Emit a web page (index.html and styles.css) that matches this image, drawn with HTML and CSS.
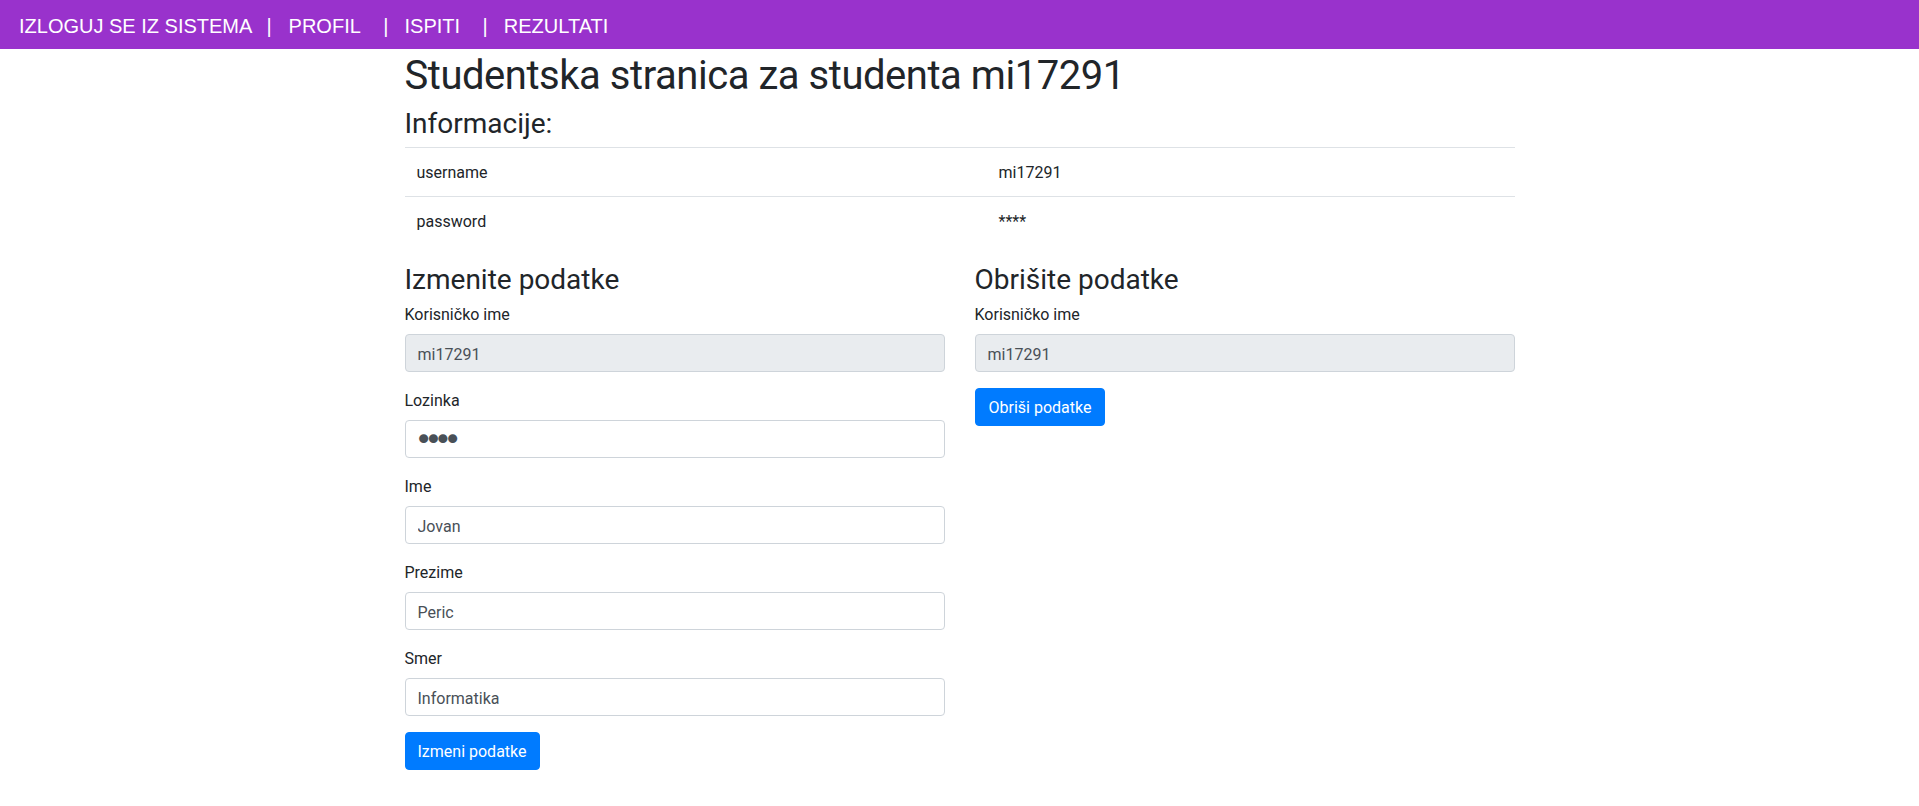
FILE: index.html
```html
<!DOCTYPE html>
<html lang="sr">
<head>
<meta charset="utf-8">
<title>Studentska stranica</title>
<link rel="stylesheet" href="styles.css">
</head>
<body>
<nav class="topbar">
  <a class="topbar-link" href="#">IZLOGUJ SE IZ SISTEMA</a><span class="topbar-sep">|</span><a class="topbar-link" href="#">PROFIL</a><span class="topbar-sep topbar-sep-wide">|</span><a class="topbar-link" href="#">ISPITI</a><span class="topbar-sep topbar-sep-wide">|</span><a class="topbar-link" href="#">REZULTATI</a>
</nav>
<main class="container">
  <h1 class="page-title">Studentska stranica za studenta mi17291</h1>
  <h3 class="section-title">Informacije:</h3>
  <table class="info-table">
    <tbody>
      <tr><td class="info-key">username</td><td>mi17291</td></tr>
      <tr><td class="info-key">password</td><td>****</td></tr>
    </tbody>
  </table>
  <div class="row">
    <section class="col">
      <h3 class="section-title">Izmenite podatke</h3>
      <form class="form">
        <div class="form-group">
          <label class="form-label">Korisničko ime</label>
          <input class="form-control" type="text" value="mi17291" readonly>
        </div>
        <div class="form-group">
          <label class="form-label">Lozinka</label>
          <input class="form-control form-control-secret" type="password" value="1234">
        </div>
        <div class="form-group">
          <label class="form-label">Ime</label>
          <input class="form-control" type="text" value="Jovan">
        </div>
        <div class="form-group">
          <label class="form-label">Prezime</label>
          <input class="form-control" type="text" value="Peric">
        </div>
        <div class="form-group">
          <label class="form-label">Smer</label>
          <input class="form-control" type="text" value="Informatika">
        </div>
        <button class="btn" type="button">Izmeni podatke</button>
      </form>
    </section>
    <section class="col">
      <h3 class="section-title">Obrišite podatke</h3>
      <form class="form">
        <div class="form-group">
          <label class="form-label">Korisničko ime</label>
          <input class="form-control" type="text" value="mi17291" readonly>
        </div>
        <button class="btn btn-wide" type="button">Obriši podatke</button>
      </form>
    </section>
  </div>
</main>
</body>
</html>
```
FILE: styles.css
```css
* {
  box-sizing: border-box;
}

body {
  margin: 0;
  background: #fff;
  color: #212529;
  font-family: Roboto, "Noto Sans", "Liberation Sans", sans-serif;
  font-size: 16px;
  line-height: 1.5;
}

.topbar {
  height: 49px;
  background: #9932cc;
  padding: 15px 0 11px 19px;
  display: flex;
  align-items: flex-start;
  font-family: "Liberation Sans", Arial, sans-serif;
  font-size: 20px;
  line-height: 23px;
}

.topbar-link {
  color: #fff;
  text-decoration: none;
}

.topbar-sep {
  color: #fff;
  margin: 0 17px 0 14px;
}

.topbar-sep-wide {
  margin-left: 22.5px;
  margin-right: 16px;
}

.container {
  width: 1140px;
  margin: 0 auto;
  padding: 0 15px;
}

.page-title {
  margin: 0 0 5px;
  padding-top: 3px;
  font-size: 40px;
  font-weight: 400;
  line-height: 48px;
  letter-spacing: -0.46px;
}

.section-title {
  margin: 0 0 6px;
  padding-top: 2px;
  font-size: 28px;
  font-weight: 400;
  line-height: 33.6px;
}

.info-table {
  width: 100%;
  border-collapse: collapse;
  margin-bottom: 16px;
}

.info-table td {
  padding: 13px 12px 11px;
  border-top: 1px solid #dee2e6;
  vertical-align: top;
}

.info-key {
  width: 582px;
}

.row {
  display: grid;
  grid-template-columns: 1fr 1fr;
  column-gap: 30px;
}

.form {
  margin-bottom: 16px;
}

.form-group {
  margin-bottom: 16px;
}

.form-label {
  display: block;
  padding-top: 1px;
  margin-bottom: 7px;
}

.form-control {
  display: block;
  width: 100%;
  height: 38px;
  padding: 7px 12px 5px;
  font-family: inherit;
  font-size: 16px;
  line-height: 24px;
  color: #495057;
  background: #fff;
  border: 1px solid #ced4da;
  border-radius: 4px;
  outline: none;
}

.form-control[readonly] {
  background: #e9ecef;
}

.form-control-secret {
  font-family: "DejaVu Sans", sans-serif;
  font-size: 31px;
  letter-spacing: -8.6px;
  padding: 6px 12px 6px 9px;
}

.btn {
  display: inline-block;
  padding: 7px 12px 5px;
  font-family: inherit;
  font-size: 16px;
  line-height: 24px;
  color: #fff;
  background: #007bff;
  border: 1px solid #007bff;
  border-radius: 4px;
  cursor: pointer;
}

.btn-wide {
  padding-left: 13px;
  padding-right: 13px;
}
```
